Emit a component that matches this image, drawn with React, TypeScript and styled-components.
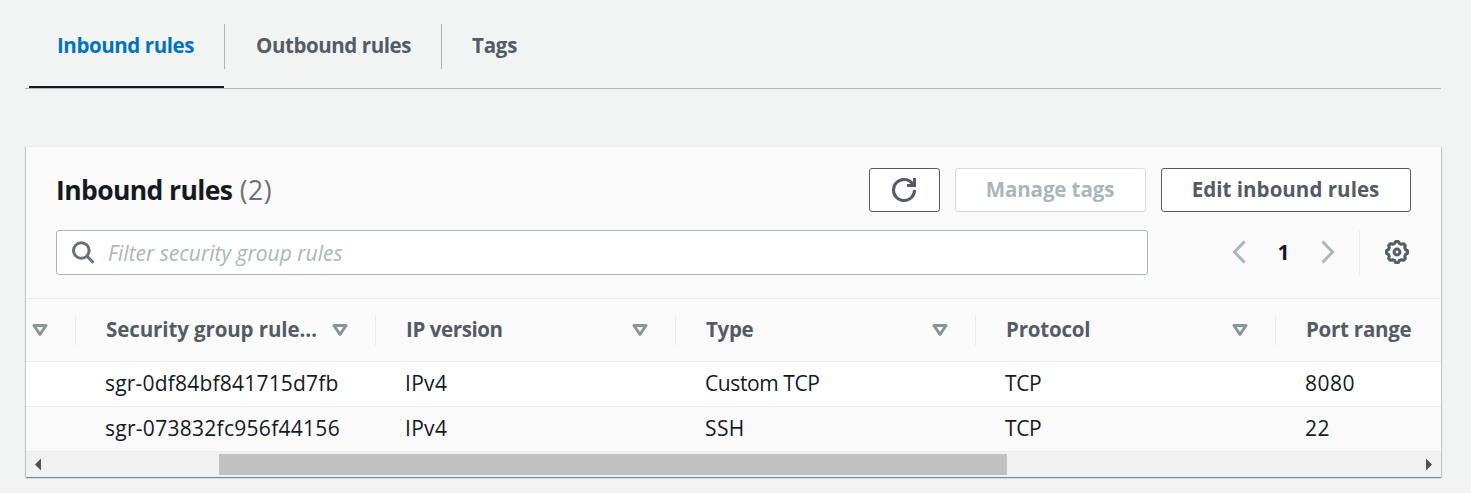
import React from 'react';
import styled, { createGlobalStyle } from 'styled-components';

const GlobalStyle = createGlobalStyle`
  *, *::before, *::after { box-sizing: border-box; }
  body {
    margin: 0;
    background: #f2f4f4;
    color: #16191f;
    font-family: 'Open Sans', 'Noto Sans', sans-serif;
    font-size: 21px;
    line-height: 30px;
  }
`;

const Page = styled.main`
  width: 1471px;
  height: 493px;
  overflow: hidden;
  padding: 24px 30px 0 25px;
`;

const TabList = styled.nav`
  display: flex;
  height: 65px;
  padding-left: 4px;
  border-bottom: 1px solid #aab7b8;
`;

const Tab = styled.a<{ $width: number; $active?: boolean; $spacing: number }>`
  display: flex;
  flex-direction: column;
  justify-content: space-between;
  width: ${(p) => p.$width}px;
  color: ${(p) => (p.$active ? '#0073bb' : '#545b64')};
  font-size: 20.5px;
  font-weight: 700;
  letter-spacing: ${(p) => p.$spacing}px;
  border-bottom: 2px solid ${(p) => (p.$active ? '#16191f' : 'transparent')};
`;

const TabLabel = styled.span<{ $first?: boolean; $last?: boolean }>`
  height: 45px;
  padding-left: ${(p) => (p.$first ? 28 : p.$last ? 31 : 32)}px;
  line-height: 43px;
  white-space: nowrap;
  margin-right: -1px;
  border-right: ${(p) => (p.$last ? 0 : 1)}px solid #aab7b8;
`;

const Panel = styled.section`
  margin: 57px 0 0 1px;
  width: 1415px;
  height: 331px;
  background: #fafafa;
  border-top: 1px solid #eaeded;
  box-shadow: 0 1px 1px 0 rgba(0, 28, 36, 0.3), 1px 1px 1px 0 rgba(0, 28, 36, 0.15), -1px 1px 1px 0 rgba(0, 28, 36, 0.15);
`;

const PanelHeader = styled.header`
  display: flex;
  align-items: center;
  height: 65px;
  padding: 21px 30px 0;
`;

const Title = styled.h2`
  flex: 1;
  margin: 0;
  font-size: 26.5px;
  line-height: 44px;
  font-weight: 700;
  letter-spacing: -0.6px;
`;

const Count = styled.span`
  margin-left: 1px;
  color: #687078;
  font-weight: 400;
  letter-spacing: 0.5px;
`;

const Actions = styled.div`
  display: flex;
  gap: 15px;
`;

const Button = styled.button<{ $width: number; $iconOnly?: boolean }>`
  display: flex;
  align-items: center;
  justify-content: center;
  width: ${(p) => p.$width}px;
  height: 44px;
  padding: 0 1px ${(p) => (p.$iconOnly ? 0 : 2)}px 0;
  font: 700 20.5px 'Open Sans', 'Noto Sans', sans-serif;
  letter-spacing: 0.04px;
  white-space: nowrap;
  color: #545b64;
  background: #fff;
  border: 1px solid #545b64;
  border-radius: 3px;

  &:disabled {
    color: #aab7b8;
    border-color: #d5dbdb;
    letter-spacing: -0.1px;
  }
`;

const Toolbar = styled.div`
  display: flex;
  align-items: center;
  height: 87px;
  padding: 18px 30px 24px;
  border-bottom: 1px solid #eaeded;
`;

const SearchBox = styled.label`
  display: flex;
  align-items: center;
  width: 1092px;
  height: 45px;
  padding: 1px 0 0 14px;
  background: #fff;
  border: 1px solid #aab7b8;
  border-radius: 3px;
`;

const SearchInput = styled.input`
  flex: 1;
  min-width: 0;
  margin-left: 12px;
  padding: 0;
  border: 0;
  outline: 0;
  background: none;
  font: italic 400 21px 'Open Sans', 'Noto Sans', sans-serif;

  &::placeholder { color: #aab7b8; opacity: 1; }
`;

const Pagination = styled.div`
  display: flex;
  align-items: center;
  margin-left: auto;
`;

const PageNumber = styled.span`
  width: 75px;
  text-align: center;
  font-size: 21px;
  font-weight: 700;
`;

const Preferences = styled.div`
  display: flex;
  align-items: center;
  height: 45px;
  margin-left: 24px;
  padding: 0 2px 0 25px;
  border-left: 1px solid #eaeded;
`;

const TableView = styled.div`
  overflow: hidden;
`;

const Row = styled.div<{ $head?: boolean; $shaded?: boolean }>`
  display: grid;
  grid-template-columns: 50px repeat(4, 300px) 165px;
  align-items: center;
  height: ${(p) => (p.$head ? 63 : 45)}px;
  background: ${(p) => (p.$head || p.$shaded ? '#fafafa' : '#fff')};
  border-bottom: 1px solid #eaeded;
`;

const HeadCell = styled.div<{ $spacing?: number; $divided?: boolean }>`
  display: flex;
  align-items: center;
  justify-content: space-between;
  height: 31px;
  padding: 0 23px 0 30px;
  white-space: nowrap;
  color: #545b64;
  font-size: 20.5px;
  font-weight: 700;
  letter-spacing: ${(p) => p.$spacing ?? 0}px;
  border-right: ${(p) => (p.$divided ? 1 : 0)}px solid #eaeded;
`;

const HeadLabel = styled.span`
  padding-bottom: 2px;
`;

const SortCell = styled(HeadCell)`
  padding: 0 23px 0 2px;
`;

const Cell = styled.div<{ $spacing?: number }>`
  padding: 0 0 2px 29px;
  white-space: nowrap;
  letter-spacing: ${(p) => p.$spacing ?? 0}px;
`;

const Scrollbar = styled.div`
  display: flex;
  align-items: center;
  justify-content: space-between;
  height: 25px;
  padding: 0 9px;
  background: #f1f1f1;
`;

const Track = styled.div`
  flex: 1;
  height: 21px;
  padding-left: 178px;
`;

const Thumb = styled.div`
  width: 788px;
  height: 21px;
  background: #c1c1c1;
`;

const Svg = styled.svg`
  display: block;
  flex: none;
  fill: none;
`;

const SortIcon = () => (
  <Svg width="24" height="24" viewBox="0 0 16 16" stroke="#879596" strokeWidth="2" strokeLinejoin="round">
    <path d="M4 5h8l-4 6z" />
  </Svg>
);

const SearchIcon = () => (
  <Svg width="25" height="25" viewBox="0 0 25 25" stroke="#687078" strokeWidth="3">
    <circle cx="10.3" cy="10.5" r="7.8" />
    <path d="M15.8 16l6.6 6.8" />
  </Svg>
);

const RefreshIcon = () => (
  <Svg width="24" height="24" viewBox="0 0 16 16" stroke="#545b64" strokeWidth="2">
    <path d="M10 5h5V0" />
    <path d="M15 8a6.957 6.957 0 0 1-7 7 6.957 6.957 0 0 1-7-7 6.957 6.957 0 0 1 7-7 6.87 6.87 0 0 1 6.3 4" />
  </Svg>
);

const Chevron = ({ d }: { d: string }) => (
  <Svg width="14" height="24" viewBox="0 0 14 24" stroke="#aab7b8" strokeWidth="3">
    <path d={d} />
  </Svg>
);

// Scalloped outline with eight lobes, the first pointing up.
const gearOutline =
  Array.from({ length: 96 }, (_, i) => {
    const a = (i / 96) * Math.PI * 2;
    const r = 9.7 + 0.95 * Math.tanh(2.2 * Math.cos(8 * a));
    return `${i ? 'L' : 'M'}${(12 + r * Math.sin(a)).toFixed(2)} ${(12 - r * Math.cos(a)).toFixed(2)}`;
  }).join('') + 'Z';

const GearIcon = () => (
  <Svg width="24" height="24" viewBox="0 0 24 24" stroke="#545b64" strokeWidth="3" strokeLinejoin="round">
    <path d={gearOutline} />
    <circle cx="12" cy="12" r="2.9" />
  </Svg>
);

const Arrow = ({ d }: { d: string }) => (
  <Svg width="6" height="13" viewBox="0 0 6 13">
    <path d={d} fill="#505050" />
  </Svg>
);

const columns = [
  { label: 'Security group rule…', spacing: -0.1 },
  { label: 'IP version', spacing: -0.4 },
  { label: 'Type', spacing: -0.3 },
  { label: 'Protocol', spacing: -0.2 },
];

const rules = [
  [['sgr-0df84bf841715d7fb', 0.2], ['IPv4', 0.3], ['Custom TCP', -0.4], ['TCP', -0.4], ['8080', 0.5]],
  [['sgr-073832fc956f44156', 0.28], ['IPv4', 0.3], ['SSH', 0.4], ['TCP', -0.4], ['22', 0.4]],
] as [string, number][][];

export default function App() {
  return (
    <Page>
      <GlobalStyle />
      <TabList>
        <Tab $width={195} $active $spacing={-0.42}><TabLabel $first>Inbound rules</TabLabel></Tab>
        <Tab $width={217} $spacing={-0.42}><TabLabel>Outbound rules</TabLabel></Tab>
        <Tab $width={107} $spacing={-0.2}><TabLabel $last>Tags</TabLabel></Tab>
      </TabList>
      <Panel>
        <PanelHeader>
          <Title>Inbound rules <Count>(2)</Count></Title>
          <Actions>
            <Button $width={71} $iconOnly aria-label="Refresh"><RefreshIcon /></Button>
            <Button $width={191} disabled>Manage tags</Button>
            <Button $width={250}>Edit inbound rules</Button>
          </Actions>
        </PanelHeader>
        <Toolbar>
          <SearchBox>
            <SearchIcon />
            <SearchInput placeholder="Filter security group rules" />
          </SearchBox>
          <Pagination>
            <Chevron d="M12.5 1.5L2.5 12l10 10.5" />
            <PageNumber>1</PageNumber>
            <Chevron d="M1.5 1.5L11.5 12l-10 10.5" />
            <Preferences><GearIcon /></Preferences>
          </Pagination>
        </Toolbar>
        <TableView>
          <Row $head>
            <SortCell $divided><SortIcon /></SortCell>
            {columns.map((c) => (
              <HeadCell key={c.label} $spacing={c.spacing} $divided>
                <HeadLabel>{c.label}</HeadLabel>
                <SortIcon />
              </HeadCell>
            ))}
            <HeadCell $spacing={-0.25}><HeadLabel>Port range</HeadLabel></HeadCell>
          </Row>
          {rules.map((cells, i) => (
            <Row key={i} $shaded={i % 2 === 1}>
              <span />
              {cells.map(([text, spacing], j) => <Cell key={j} $spacing={spacing}>{text}</Cell>)}
            </Row>
          ))}
          <Scrollbar>
            <Arrow d="M6 0.5v12L0 6.5z" />
            <Track><Thumb /></Track>
            <Arrow d="M0 0.5v12l6-6z" />
          </Scrollbar>
        </TableView>
      </Panel>
    </Page>
  );
}
